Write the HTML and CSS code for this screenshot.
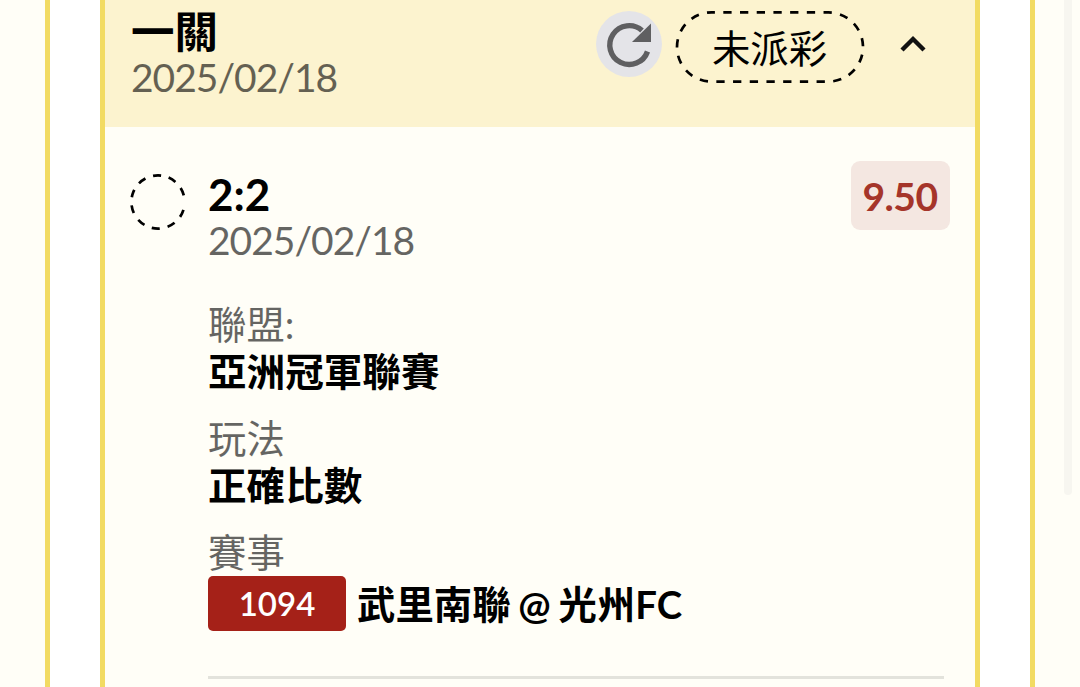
FILE: index.html
```html
<!DOCTYPE html>
<html lang="zh-Hant">
<head>
    <meta charset="UTF-8">
    <meta name="viewport" content="width=device-width, initial-scale=1.0">
    <title>投注紀錄</title>
    <link rel="stylesheet" href="styles.css">
</head>
<body>
    <div class="outer-card">
        <div class="bet-card">
            <div class="bet-header">
                <div class="bet-heading">
                    <div class="bet-title">一關</div>
                    <div class="date">2025/02/18</div>
                </div>
                <div class="bet-actions">
                    <button class="refresh">
                        <svg width="66" height="66" viewBox="0 0 66 66">
                            <path d="M51.5 40.5 A19.4 19.4 0 1 1 46 19.5" fill="none" stroke="#5f5f61" stroke-width="5.4"/>
                            <path d="M55 12.5 V31 H36 Z" fill="#5f5f61"/>
                        </svg>
                    </button>
                    <div class="status">
                        <svg class="status-border" width="190" height="72" viewBox="0 0 190 72">
                            <rect x="2" y="1.4" width="186" height="69.2" rx="34.6" fill="none" stroke="#000" stroke-width="2.7" stroke-dasharray="8.3 8.404" stroke-dashoffset="5"/>
                        </svg>
                        <span>未派彩</span>
                    </div>
                    <svg class="chevron" width="28" height="20" viewBox="0 0 28 20">
                        <path d="M3 16 L14 5 L25 16" fill="none" stroke="#111" stroke-width="4.4"/>
                    </svg>
                </div>
            </div>
            <div class="bet-body">
                <svg class="pending" width="56" height="56" viewBox="0 0 56 56">
                    <circle cx="28" cy="28" r="26.6" pathLength="360" transform="rotate(17 28 28)" fill="none" stroke="#000" stroke-width="2.7" stroke-dasharray="17.2 17.4 17.2 17.4 17.2 17.4 17.2 17.4 17.2 17.4 17.2 17.4 17.2 17.4 17.2 17.4 17.2 17.4 17.2 40"/>
                </svg>
                <div class="bet-detail">
                    <div class="pick">
                        <div>
                            <div class="score">2:2</div>
                            <div class="date">2025/02/18</div>
                        </div>
                        <div class="odds">9.50</div>
                    </div>
                    <div class="field">
                        <div class="label">聯盟:</div>
                        <div class="value">亞洲冠軍聯賽</div>
                    </div>
                    <div class="field">
                        <div class="label">玩法</div>
                        <div class="value">正確比數</div>
                    </div>
                    <div class="field">
                        <div class="label">賽事</div>
                        <div class="match">
                            <span class="match-no">1094</span>
                            <span class="value teams">武里南聯 @ 光州FC</span>
                        </div>
                    </div>
                </div>
            </div>
        </div>
    </div>
    <div class="scrollbar"></div>
</body>
</html>
```
FILE: styles.css
```css
* {
    box-sizing: border-box;
}

body {
    margin: 0;
    height: 687px;
    overflow: hidden;
    display: flex;
    background-color: #fffef7;
    font-family: Lato, "Noto Sans CJK TC", sans-serif;
    color: #000;
}

.outer-card {
    width: 990.5px;
    margin-left: 44.5px;
    padding: 0 50.5px;
    background-color: #fff;
    border: solid #f2db63;
    border-width: 0 5px;
}

.bet-card {
    height: 687px;
    background-color: #fffef7;
    border: solid #f2db63;
    border-width: 0 5px;
}

.bet-header {
    height: 127px;
    display: flex;
    justify-content: space-between;
    padding: 8px 48px 0 26px;
    background-color: #fcf3cf;
}

.bet-title {
    font-size: 43.5px;
    font-weight: 700;
    line-height: 46px;
}

.date {
    font-size: 39px;
    line-height: 46px;
    letter-spacing: -1px;
    color: #000;
    opacity: 0.6;
}

.bet-actions {
    display: flex;
    align-items: flex-start;
    padding-top: 3px;
}

.refresh {
    width: 66px;
    height: 66px;
    padding: 0;
    border: none;
    border-radius: 50%;
    background-color: #e4e4e8;
}

.refresh svg {
    display: block;
}

.status {
    position: relative;
    width: 190px;
    height: 72px;
    margin-left: 13px;
    font-size: 38.4px;
    line-height: 74px;
    text-align: center;
}

.status-border {
    position: absolute;
    left: 0;
    top: 0;
}

.chevron {
    margin: 23px 0 0 34px;
}

.bet-body {
    display: flex;
    padding: 34px 25px 0 25px;
}

.pending {
    flex: none;
    margin: 13px 22px 0 0;
}

.bet-detail {
    flex: 1;
    height: 518px;
    margin-right: 6px;
    border-bottom: 3px solid #e3e3dc;
}

.pick {
    display: flex;
    justify-content: space-between;
    margin-right: -6px;
}

.score {
    margin-top: 11px;
    font-size: 44px;
    font-weight: 700;
    line-height: 45px;
}

.odds {
    width: 99px;
    height: 69px;
    border-radius: 9px;
    background-color: #f4e7e1;
    color: #a5352a;
    font-size: 39px;
    font-weight: 700;
    line-height: 70px;
    letter-spacing: -0.5px;
    text-align: center;
}

.field {
    height: 114px;
}

.pick + .field {
    margin-top: 38px;
}

.label {
    font-size: 38.4px;
    line-height: 47px;
    opacity: 0.6;
}

.value {
    font-size: 38.6px;
    font-weight: 700;
    line-height: 47px;
}

.teams {
    padding-top: 2px;
    font-size: 38.4px;
    word-spacing: -1.6px;
}

.match {
    display: flex;
    align-items: center;
    gap: 11px;
}

.match-no {
    width: 138px;
    height: 55px;
    border-radius: 5px;
    background-color: #a52118;
    color: #fff;
    font-size: 33px;
    font-weight: 600;
    line-height: 55px;
    text-align: center;
}

.scrollbar {
    width: 8px;
    height: 495px;
    margin-left: 28.5px;
    border-radius: 0 0 4px 4px;
    background-color: #f7f6f0;
}
```
